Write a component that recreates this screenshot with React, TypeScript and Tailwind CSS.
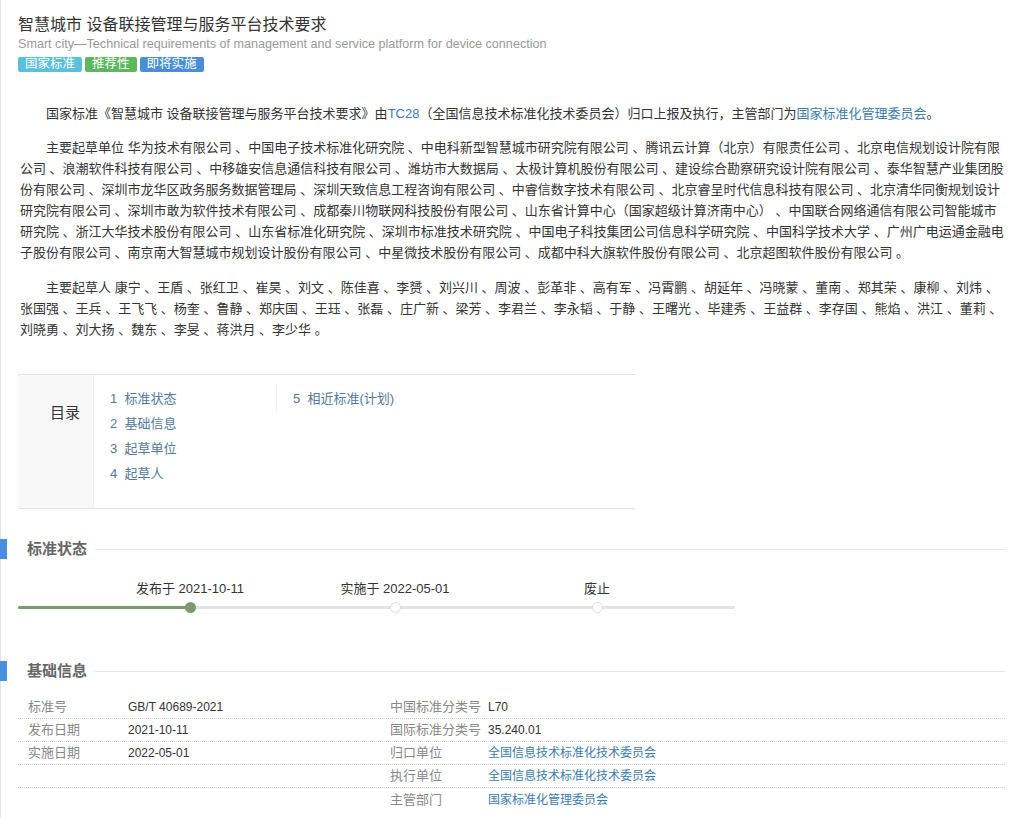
const units = [
  '华为技术有限公司',
  '中国电子技术标准化研究院',
  '中电科新型智慧城市研究院有限公司',
  '腾讯云计算（北京）有限责任公司',
  '北京电信规划设计院有限公司',
  '浪潮软件科技有限公司',
  '中移雄安信息通信科技有限公司',
  '潍坊市大数据局',
  '太极计算机股份有限公司',
  '建设综合勘察研究设计院有限公司',
  '泰华智慧产业集团股份有限公司',
  '深圳市龙华区政务服务数据管理局',
  '深圳天致信息工程咨询有限公司',
  '中睿信数字技术有限公司',
  '北京睿呈时代信息科技有限公司',
  '北京清华同衡规划设计研究院有限公司',
  '深圳市敢为软件技术有限公司',
  '成都秦川物联网科技股份有限公司',
  '山东省计算中心（国家超级计算济南中心）',
  '中国联合网络通信有限公司智能城市研究院',
  '浙江大华技术股份有限公司',
  '山东省标准化研究院',
  '深圳市标准技术研究院',
  '中国电子科技集团公司信息科学研究院',
  '中国科学技术大学',
  '广州广电运通金融电子股份有限公司',
  '南京南大智慧城市规划设计股份有限公司',
  '中星微技术股份有限公司',
  '成都中科大旗软件股份有限公司',
  '北京超图软件股份有限公司',
]

const people = [
  '康宁', '王盾', '张红卫', '崔昊', '刘文', '陈佳喜', '李赟', '刘兴川', '周波', '彭革非',
  '高有军', '冯霄鹏', '胡延年', '冯晓蒙', '董南', '郑其荣', '康柳', '刘炜', '张国强', '王兵',
  '王飞飞', '杨奎', '鲁静', '郑庆国', '王珏', '张磊', '庄广新', '梁芳', '李君兰', '李永韬',
  '于静', '王曙光', '毕建秀', '王益群', '李存国', '熊焰', '洪江', '董莉', '刘晓勇', '刘大扬',
  '魏东', '李旻', '蒋洪月', '李少华',
]

const font = { fontFamily: "'Liberation Sans', 'Noto Sans CJK SC', sans-serif" }

function SectionTitle({ title }: { title: string }) {
  return (
    <div className="-ml-[18px] flex h-[20px] items-center">
      <div className="h-[20px] w-[7px] bg-[#4a90e2]" />
      <div className="ml-[20px] text-[15px] font-semibold text-[#666]">{title}</div>
      <div className="ml-[8px] h-px flex-1 bg-[#e6e6e6]" />
    </div>
  )
}

function Stop({ label, active }: { label: string; active?: boolean }) {
  return (
    <div className="flex w-[160px] flex-col items-center">
      <div className="text-[13px] leading-[20px] text-[#333]">{label}</div>
      <div
        className={
          active
            ? 'mt-[3px] h-[11px] w-[11px] rounded-full bg-[#7d9a6c]'
            : 'mt-[3px] h-[11px] w-[11px] rounded-full border border-[#dcdcdc] bg-white'
        }
      />
    </div>
  )
}

const rows = [
  { l: '标准号', lv: 'GB/T 40689-2021', r: '中国标准分类号', rv: 'L70' },
  { l: '发布日期', lv: '2021-10-11', r: '国际标准分类号', rv: '35.240.01' },
  { l: '实施日期', lv: '2022-05-01', r: '归口单位', rv: '全国信息技术标准化技术委员会', link: true },
  { l: '', lv: '', r: '执行单位', rv: '全国信息技术标准化技术委员会', link: true },
  { l: '', lv: '', r: '主管部门', rv: '国家标准化管理委员会', link: true },
]

export default function App() {
  return (
    <div className="min-h-[818px] border-l border-[#e3e3e3] bg-white pl-[17px] pr-[16px] text-[#333]" style={font}>
      {/* header */}
      <div className="pt-[14px]">
        <h1 className="text-[16px] leading-[22px] text-[#333]">智慧城市 设备联接管理与服务平台技术要求</h1>
        <div className="text-[12.6px] leading-[16px] text-[#999]">
          Smart city—Technical requirements of management and service platform for device connection
        </div>
        <div className="mt-[5px] flex gap-[3px] text-[12.5px] leading-[15px] text-white">
          <span className="rounded-[2px] bg-[#5bc0de] px-[7px]">国家标准</span>
          <span className="rounded-[2px] bg-[#5cb85c] px-[7px]">推荐性</span>
          <span className="rounded-[2px] bg-[#4a8fd6] px-[7px]">即将实施</span>
        </div>
      </div>

      {/* description */}
      <div className="mt-[31px] pl-[2px] text-[13px] leading-[21px]">
        <p className="indent-[26px]">
          国家标准《智慧城市 设备联接管理与服务平台技术要求》由<span className="text-[#3a7bb0]">TC28</span>（全国信息技术标准化技术委员会）归口上报及执行，主管部门为<span className="text-[#3a7bb0]">国家标准化管理委员会</span>。
        </p>
        <p className="mt-[13px] indent-[26px]">
          主要起草单位 {units.join(' 、')} 。
        </p>
        <p className="mt-[14px] indent-[26px]">
          主要起草人 {people.join(' 、')} 。
        </p>
      </div>

      {/* toc */}
      <div className="mt-[34px] flex w-[617px] border-y border-[#e2e2e2]">
        <div className="flex w-[75px] items-start justify-end bg-[#f8f8f8] pr-[13px] pt-[27px] text-[15px] text-[#333]">
          目录
        </div>
        <div className="flex border-l border-[#eee] pl-[16px] pt-[11px] pb-[22px] text-[13px] leading-[25px] text-[#52799f]">
          <div className="w-[166px]">
            <div>1&nbsp;&nbsp;标准状态</div>
            <div>2&nbsp;&nbsp;基础信息</div>
            <div>3&nbsp;&nbsp;起草单位</div>
            <div>4&nbsp;&nbsp;起草人</div>
          </div>
          <div className="self-start border-l border-[#eee] pl-[16px]">5&nbsp;&nbsp;相近标准(计划)</div>
        </div>
      </div>

      {/* status */}
      <div className="mt-[30px]">
        <SectionTitle title="标准状态" />
        <div className="relative mt-[20px] w-[717px]">
          <div className="absolute left-0 right-0 top-[27px] h-[3px] rounded bg-[#e3e3e3]">
            <div className="h-[3px] w-[172px] rounded bg-[#7d9a6c]" />
          </div>
          <div className="relative flex pl-[92px]">
            <Stop label="发布于 2021-10-11" active />
            <div className="w-[45px]" />
            <Stop label="实施于 2022-05-01" />
            <div className="w-[42px]" />
            <Stop label="废止" />
          </div>
        </div>
      </div>

      {/* basic info */}
      <div className="mt-[48px]">
        <SectionTitle title="基础信息" />
        <div className="mt-[15px]">
          {rows.map((r, i) => (
            <div
              key={i}
              className={
                i < 4
                  ? 'flex h-[23px] items-center border-b border-dotted border-[#d0d0d0] pl-[10px]'
                  : 'flex h-[23px] items-center pl-[10px]'
              }
            >
              <div className="w-[100px] text-[13px] text-[#888]">{r.l}</div>
              <div className="w-[262px] text-[12px] text-[#333]">{r.lv}</div>
              <div className="w-[98px] text-[13px] text-[#888]">{r.r}</div>
              <div className={r.link ? 'text-[12px] text-[#3a7bb0]' : 'text-[12px] text-[#333]'}>{r.rv}</div>
            </div>
          ))}
        </div>
      </div>
    </div>
  )
}
